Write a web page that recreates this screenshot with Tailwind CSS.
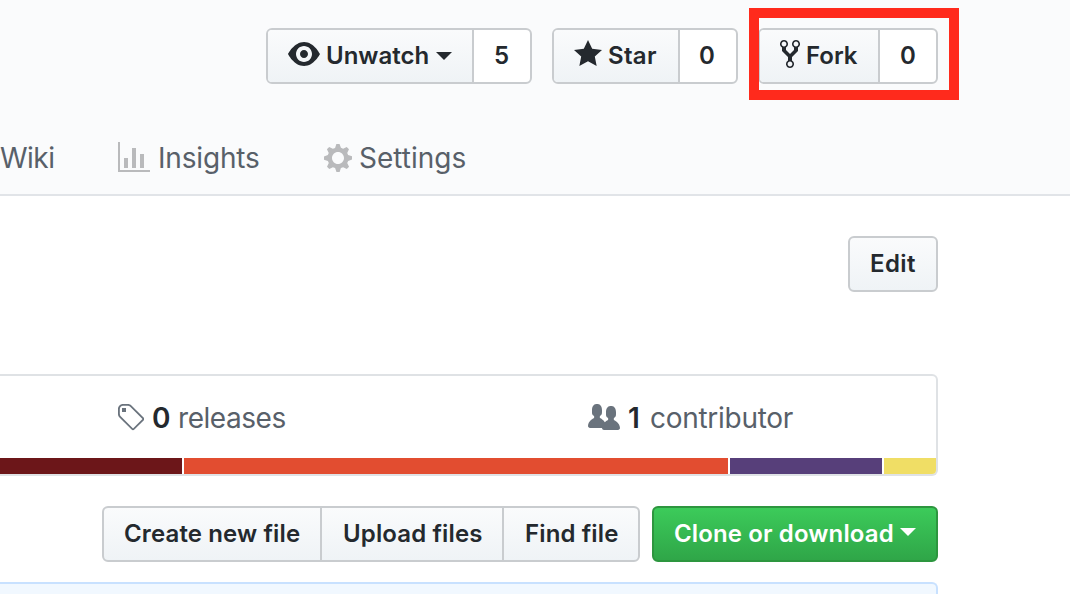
<!DOCTYPE html>
<html lang="en">
<head>
<meta charset="utf-8">
<title>Repository</title>
<script src="https://cdn.jsdelivr.net/npm/@tailwindcss/browser@4"></script>
</head>
<body class="relative h-[594px] w-[1070px] overflow-hidden bg-white font-['Inter',sans-serif] text-[#24292e]">
<header class="h-[196px] border-b-2 border-[#e1e4e8] bg-[#fafbfc] pt-7">
  <div class="flex h-14 gap-5 pl-[266px] text-2xl font-semibold whitespace-nowrap">
    <div class="flex w-[266px] overflow-hidden rounded-md border-2 border-[#c9cccf] bg-white">
      <div class="flex w-[206px] shrink-0 border-r-2 border-[#c9cccf] bg-linear-to-b from-[#fafbfc] to-[#eff3f6] pl-5">
        <svg class="mt-2 h-8 w-8 shrink-0" viewBox="0 0 16 16" fill="currentColor"><path fill-rule="evenodd" d="M8.06 2C3 2 0 8 0 8s3 6 8.06 6C13 14 16 8 16 8s-3-6-7.94-6zM8 12c-2.2 0-4-1.78-4-4 0-2.2 1.8-4 4-4 2.22 0 4 1.8 4 4 0 2.22-1.78 4-4 4zm2-4c0 1.11-.89 2-2 2-1.11 0-2-.89-2-2 0-1.11.89-2 2-2 1.11 0 2 .89 2 2z"/></svg>
        <span class="ml-1.5 w-[110px] leading-[51px]">Unwatch</span>
        <span class="mt-[22px] h-0 w-0 border-x-8 border-t-8 border-x-transparent border-t-[#24292e]"></span>
      </div>
      <span class="flex-1 pr-px text-center leading-[51px]">5</span>
    </div>
    <div class="flex w-[186px] overflow-hidden rounded-md border-2 border-[#c9cccf] bg-white">
      <div class="flex w-[126px] border-r-2 border-[#c9cccf] bg-linear-to-b from-[#fafbfc] to-[#eff3f6] pl-5">
        <svg class="mt-2 h-8 w-7 shrink-0" viewBox="0 0 14 16" fill="currentColor"><path d="M14 6l-4.9-.64L7 1 4.9 5.36 0 6l3.6 3.26L2.67 14 7 11.67 11.33 14l-.93-4.74L14 6z"/></svg>
        <span class="ml-1.5 leading-[51px] tracking-[0.3px]">Star</span>
      </div>
      <span class="flex-1 pr-0.5 text-center leading-[51px]">0</span>
    </div>
    <div class="flex w-[180px] overflow-hidden rounded-md border-2 border-[#c9cccf] bg-white">
      <div class="flex w-[120px] border-r-2 border-[#c9cccf] bg-linear-to-b from-[#fafbfc] to-[#eff3f6] pl-5">
        <svg class="mt-2 h-8 w-5 shrink-0" viewBox="0 0 10 16" fill="currentColor"><path fill-rule="evenodd" d="M8 1a1.993 1.993 0 0 0-1 3.72V6L5 8 3 6V4.72A1.993 1.993 0 0 0 2 1a1.993 1.993 0 0 0-1 3.72V6.5l3 3v1.78A1.993 1.993 0 0 0 5 15a1.993 1.993 0 0 0 1-3.72V9.5l3-3V4.72A1.993 1.993 0 0 0 8 1zM2 4.2C1.34 4.2.8 3.65.8 3c0-.65.55-1.2 1.2-1.2.65 0 1.2.55 1.2 1.2 0 .65-.55 1.2-1.2 1.2zm3 10c-.66 0-1.2-.55-1.2-1.2 0-.65.55-1.2 1.2-1.2.65 0 1.2.55 1.2 1.2 0 .65-.55 1.2-1.2 1.2zm3-10c-.66 0-1.2-.55-1.2-1.2 0-.65.55-1.2 1.2-1.2.65 0 1.2.55 1.2 1.2 0 .65-.55 1.2-1.2 1.2z"/></svg>
        <span class="ml-1.5 leading-[51px]">Fork</span>
      </div>
      <span class="flex-1 text-center leading-[51px]">0</span>
    </div>
  </div>
  <nav class="mt-[58px] flex h-8 text-[28px] leading-8 whitespace-nowrap text-[#586069]">
    <span class="w-[118px] tracking-[-0.5px]">Wiki</span>
    <span class="flex w-[206px]">
      <svg class="mr-2 h-8 w-8 shrink-0 text-[#b9babc]" viewBox="0 0 16 16" fill="currentColor"><path d="M16 14v1H0V0h1v14h15zM5 13H3V8h2v5zm4 0H7V3h2v10zm4 0h-2V6h2v7z"/></svg>
      <span class="tracking-[-0.18px]">Insights</span>
    </span>
    <span class="flex">
      <svg class="mr-[7px] h-8 w-7 shrink-0 text-[#b9babc]" viewBox="0 0 14 16" fill="currentColor"><path fill-rule="evenodd" d="M14 8.77v-1.6l-1.94-.64-.45-1.09.88-1.84-1.13-1.13-1.81.91-1.09-.45-.69-1.92h-1.6l-.63 1.94-1.11.45-1.84-.88-1.13 1.13.91 1.81-.45 1.09L0 7.23v1.59l1.94.64.45 1.09-.88 1.84 1.13 1.13 1.81-.91 1.09.45.69 1.92h1.59l.63-1.94 1.11-.45 1.84.88 1.13-1.13-.92-1.81.47-1.09L14 8.75v.02zM7 11c-1.66 0-3-1.34-3-3s1.34-3 3-3 3 1.34 3 3-1.34 3-3 3z"/></svg>
      <span>Settings</span>
    </span>
  </nav>
</header>
<main class="w-[938px] pt-10 whitespace-nowrap">
  <div class="flex justify-end">
    <div class="h-14 w-[90px] rounded-md border-2 border-[#c9cccf] bg-linear-to-b from-[#fafbfc] to-[#eff3f6] pl-5 text-2xl leading-[51px] font-semibold tracking-[0.4px]">Edit</div>
  </div>
  <section class="mt-[82px] h-[102px] overflow-hidden rounded-r-md border-2 border-l-0 border-[#dfe2e5]">
    <div class="flex h-[82px] pt-[26px] pl-[116px] text-[28px] leading-8 text-[#586069]">
      <div class="flex w-[472px]">
        <svg class="mr-2 h-8 w-7 shrink-0 text-[#6a737d]" viewBox="0 0 14 16" fill="currentColor"><path fill-rule="evenodd" d="M7.73 1.73C7.26 1.26 6.62 1 5.96 1H3.5C2.13 1 1 2.13 1 3.5v2.47c0 .66.27 1.3.73 1.77l6.06 6.06c.39.39 1.02.39 1.41 0l4.59-4.59a.996.996 0 0 0 0-1.41L7.73 1.73zM2.38 7.09c-.31-.3-.47-.7-.47-1.13V3.5c0-.88.72-1.59 1.59-1.59h2.47c.42 0 .83.16 1.13.47l6.14 6.13-4.73 4.73-6.13-6.15zM3.01 3h2v2H3V3h.01z"/></svg>
        <span class="w-[26px] font-semibold text-[#24292e]">0</span><span class="tracking-[-0.45px]">releases</span>
      </div>
      <div class="flex">
        <svg class="mr-2 h-8 w-8 shrink-0 text-[#6a737d]" viewBox="0 0 16 16" fill="currentColor"><path fill-rule="evenodd" d="M16 12.999c0 .439-.45 1-1 1H7.995c-.539 0-.994-.447-.995-.999H1c-.54 0-1-.561-1-1 0-2.634 3-4 3-4s.229-.409 0-1c-.841-.621-1.058-.59-1-3 .058-2.419 1.367-3 2.5-3s2.442.58 2.5 3c.058 2.41-.159 2.379-1 3-.229.59 0 1 0 1s1.549.711 2.42 2.088C9.196 9.369 10 8.999 10 8.999s.229-.409 0-1c-.841-.62-1.058-.59-1-3 .058-2.419 1.367-3 2.5-3s2.437.581 2.495 3c.059 2.41-.158 2.38-1 3-.229.59 0 1 0 1s3.005 1.366 3.005 4"/></svg>
        <span class="w-[22px] font-semibold text-[#24292e]">1</span><span class="tracking-[-0.28px]">contributor</span>
      </div>
    </div>
    <div class="flex h-4 gap-0.5">
      <span class="w-[182px] bg-[#6c1619]"></span>
      <span class="w-[544px] bg-[#e24d30]"></span>
      <span class="w-[152px] bg-[#573f7a]"></span>
      <span class="flex-1 bg-[#f0de65]"></span>
    </div>
  </section>
  <div class="mt-[30px] flex justify-end gap-3 text-2xl leading-[51px] font-semibold tracking-[0.13px]">
    <div class="flex h-14 w-[538px] overflow-hidden rounded-md border-2 border-[#c9cccf] bg-linear-to-b from-[#fafbfc] to-[#eff3f6]">
      <span class="w-[218px] border-r-2 border-[#c9cccf] pl-5">Create new file</span>
      <span class="w-[182px] border-r-2 border-[#c9cccf] pl-[21px]">Upload files</span>
      <span class="pl-[21px]">Find file</span>
    </div>
    <div class="flex h-14 w-[286px] rounded-md border-2 border-[#2d963f] bg-linear-to-b from-[#3ccb5a] to-[#2fa648] pl-5 text-white">
      <span class="w-[226px]">Clone or download</span>
      <span class="mt-5 h-0 w-0 border-x-8 border-t-8 border-x-transparent border-t-white"></span>
    </div>
  </div>
  <div class="mt-5 h-10 rounded-tr-md border-t-2 border-r-2 border-[#c8e1ff] bg-[#f1f8ff]"></div>
</main>
<div class="absolute top-2 left-[749px] h-[92px] w-[210px] border-10 border-[#ff2a1c]"></div>
</body>
</html>
